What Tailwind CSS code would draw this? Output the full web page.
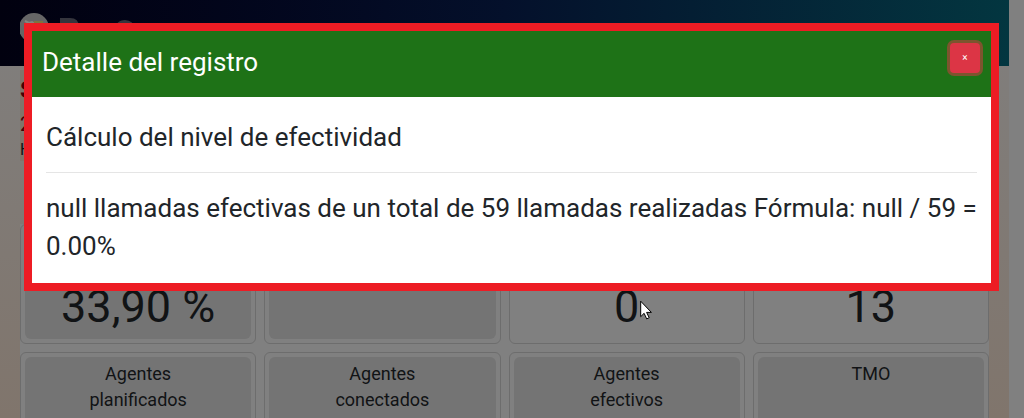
<!DOCTYPE html>
<html lang="es">
<head>
<meta charset="utf-8">
<meta name="viewport" content="width=device-width, initial-scale=1">
<title>Detalle del registro</title>
<script src="https://cdn.jsdelivr.net/npm/@tailwindcss/browser@4"></script>
</head>
<body class="relative h-screen overflow-hidden bg-[#808080] font-['Roboto',sans-serif] text-[#111315]">
<div class="mr-[15px] flex h-full flex-col bg-linear-to-b from-[#807f7e] via-[#807a75] to-[#80756c]">
  <header class="flex h-[66px] shrink-0 items-start bg-linear-to-r from-[#01010f] via-[#04102b] to-[#033640] px-5 pt-3">
    <svg class="h-9 w-28" viewBox="0 0 112 36" aria-hidden="true">
      <circle cx="14" cy="16" r="15" fill="#666"/>
      <path d="M5 9l4 2 3-1 4 3" stroke="#85867f" stroke-width="2" fill="none"/>
      <path d="M14 9h9v3h-9z" fill="#7d7440"/>
      <path d="M40 6h10q9 0 9 9v12H40z" fill="#35353d"/>
      <circle cx="105" cy="19" r="9" fill="none" stroke="#35353d" stroke-width="4"/>
    </svg>
  </header>
  <main class="flex min-h-0 grow flex-col px-5 pt-1">
    <section class="flex h-[91px] shrink-0 flex-col self-start bg-[#80756b] pt-0.5">
      <strong class="text-2xl leading-9 text-[#480006]">S</strong>
      <span class="text-xl leading-8 text-[#480006]">2</span>
      <span class="text-base leading-5">H</span>
    </section>
    <section class="mt-[63px] grid shrink-0 grid-cols-4 gap-2 bg-[#808080] text-center text-lg leading-[26px]">
      <article class="h-[120px] rounded-md border border-[#6d6d6d] p-1"><div class="flex h-full items-end justify-center rounded-md bg-[#747474] pb-1.5 text-[45px] leading-[52px]">33,90 %</div></article>
      <article class="h-[120px] rounded-md border border-[#6d6d6d] p-1"><div class="h-full rounded-md bg-[#747474]"></div></article>
      <article class="h-[120px] rounded-md border border-[#6d6d6d] p-1"><div class="flex h-full items-end justify-center pb-1.5 text-[45px] leading-[52px]">0</div></article>
      <article class="h-[120px] rounded-md border border-[#6d6d6d] p-1"><div class="flex h-full items-end justify-center pb-1.5 text-[45px] leading-[52px]">13</div></article>
      <article class="h-[120px] rounded-md border border-[#6d6d6d] p-1"><div class="h-full rounded-md bg-[#747474] pt-1">Agentes<br>planificados</div></article>
      <article class="h-[120px] rounded-md border border-[#6d6d6d] p-1"><div class="h-full rounded-md bg-[#747474] pt-1">Agentes<br>conectados</div></article>
      <article class="h-[120px] rounded-md border border-[#6d6d6d] p-1"><div class="h-full rounded-md bg-[#747474] pt-1">Agentes<br>efectivos</div></article>
      <article class="h-[120px] rounded-md border border-[#6d6d6d] p-1"><div class="h-full rounded-md bg-[#747474] pt-1">TMO</div></article>
    </section>
  </main>
</div>

<div role="dialog" aria-modal="true" aria-labelledby="titulo" class="absolute top-[23px] right-[25px] left-6 border-8 border-[#ed1c24] bg-white text-[26px] leading-[38px] text-[#212529]">
  <div class="flex items-start justify-between bg-[#1e7217] pt-3 pr-[11px] pb-4 pl-[10px] text-white">
    <h1 id="titulo">Detalle del registro</h1>
    <button type="button" aria-label="Cerrar" class="size-[30px] rounded-sm bg-[#dc3545] text-[10px] leading-none text-white ring-3 ring-[#dc3545]/50">×</button>
  </div>
  <div class="pt-[21px] pr-2 pb-[18px] pl-[14px]">
    <h2>Cálculo del nivel de efectividad</h2>
    <hr class="mt-4 mr-1.5 mb-4 border-[#e5e5e5]">
    <p>null llamadas efectivas de un total de 59 llamadas realizadas Fórmula: null / 59 = 0.00%</p>
  </div>
</div>

<svg class="absolute top-[300px] left-[640px] h-5 w-3" viewBox="0 0 12 20" aria-hidden="true">
  <path d="M.7 1.2v15.5l3.4-3.4 2.6 5.6 2.5-1.2-2.6-5.3h4.8z" fill="#fff" stroke="#000" stroke-width="1"/>
</svg>
</body>
</html>
